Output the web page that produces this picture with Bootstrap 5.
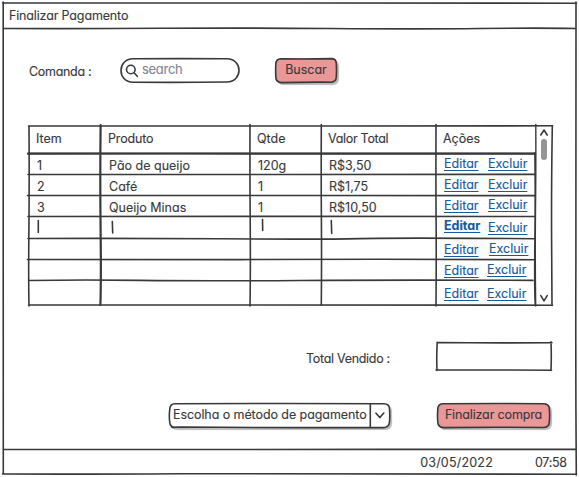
<!DOCTYPE html>
<html lang="pt-BR">
<head>
<meta charset="utf-8">
<meta name="viewport" content="width=device-width, initial-scale=1">
<title>Finalizar Pagamento</title>
<link href="https://cdn.jsdelivr.net/npm/bootstrap@5.3.0/dist/css/bootstrap.min.css" rel="stylesheet">
<style>
  :root { --ink: #38393b; --rose: #e99797; --link: #155a9f; }
  body { font-family: Inter, "Liberation Sans", sans-serif; font-feature-settings: "cv11"; font-size: 12.5px; line-height: 16px; color: var(--ink); -webkit-text-stroke: .12px; }
  .window { width: 579px; height: 477px; }
  .ink { inset: 0; width: 100%; height: 100%; overflow: visible; fill: none; stroke: var(--ink); stroke-width: 1.6; stroke-linecap: round; stroke-linejoin: round; pointer-events: none; }
  .tight { letter-spacing: -.15px; }
  .tighter { letter-spacing: -.3px; }
  .titlebar { height: 29px; padding: 8px 0 0 9px; }
  .searchrow { height: 97px; padding: 29px 0 0 29px; }
  .cmd-label { width: 91px; padding-top: 6px; }
  .pill { width: 120px; height: 25px; margin-right: 35px; padding: 3px 0 0 22px; color: #85858f; font-size: 13px; letter-spacing: -.3px; }
  .sketch-btn { border: 0; border-radius: 6px; background: var(--rose); color: var(--ink); font: inherit; line-height: 16px; box-shadow: 2px 2px 1px #b9b9b9; }
  .find { width: 62px; height: 25px; }
  .sketch-btn span { display: block; margin-top: -2px; }
  .grid-area { height: 179px; margin-left: 29px; width: 523px; }
  .orders { width: 507px; height: 179px; table-layout: fixed; border-collapse: collapse; color: inherit; }
  .orders th, .orders td { padding: 4.5px 0 0 8px; font-weight: 400; vertical-align: top; overflow: hidden; white-space: nowrap; }
  .orders th { padding-left: 7px; }
  .orders th:nth-child(2) { padding-left: 8px; }
  .orders td:nth-child(2) { padding-left: 9px; }
  .orders td.acts { padding: 1px 0 0 8px; }
  .acts a { color: var(--link); text-decoration: underline; text-underline-offset: 2px; text-decoration-skip-ink: none; text-decoration-thickness: 1px; }
  .acts a:first-child { width: 44px; }
  .acts .near { width: 43px !important; }
  .acts .far { width: 45px !important; }
  .t1 { padding-top: 1px; } .t2 { padding-top: 2px; } .t3 { padding-top: 3px; } .t4 { padding-top: 4px; }
  .scroller { width: 16px; padding: 13px 0 0 5px; }
  .thumb { width: 6px; height: 21px; border-radius: 3px; background: #949494; }
  .totalrow { height: 98px; padding: 37px 27px 0 0; }
  .total-label { width: 130px; padding-top: 9px; }
  .total-box { width: 116px; height: 28px; }
  .payrow { height: 46px; padding-left: 169px; }
  .method { width: 221px; height: 25px; border-radius: 6px; background: #fff; box-shadow: 2px 2px 1px #bdbdbd; padding: 4px 0 0 4px; margin-right: 47px; letter-spacing: -.08px; }
  .finish { width: 113px; height: 25px; letter-spacing: -.14px; }
  .statusbar { height: 27px; padding: 6px 13px 0 0; }
  .stamp { letter-spacing: .2px; }
  .clock { width: 31px; margin-left: 42px; letter-spacing: -.3px; }
</style>
<script src="https://cdn.jsdelivr.net/npm/bootstrap@5.3.0/dist/js/bootstrap.bundle.min.js"></script>
</head>
<body class="overflow-hidden bg-white">
<main class="window position-relative d-flex flex-column text-nowrap">
  <svg class="ink position-absolute" viewBox="0 0 579 477">
    <path d="M2.500 3Q150 2.800 300 3T576.500 3.200M3.200 2Q3.500 120 3.200 240T3.300 474M576 2Q576.300 150 575.900 260T576.300 475M2.500 474Q80 474.400 180 473.700T576.500 474.200"/>
    <path d="M3.500 28.500Q80 28.800 160 28.300T330 28.500T480 28.500T575.500 28.500M3.500 449.500Q90 449.200 180 449.500T380 449.400T575.500 449.400"/>
  </svg>
  <header class="titlebar tight">Finalizar Pagamento</header>
  <section class="searchrow d-flex align-items-start">
    <span class="cmd-label tighter">Comanda :</span>
    <div class="pill position-relative">
      <svg class="ink position-absolute" viewBox="0 0 120 25">
        <path d="M13 .8Q60 .4 107 .8C123 1 123 23.500 107 24Q60 24.600 13 24.200C-3 24 -3 1 13 .8Z"/>
        <circle cx="10.800" cy="11.500" r="4.300"/><path d="M14 14.800L17.300 18.300"/>
      </svg>search</div>
    <button class="sketch-btn find position-relative p-0" type="button">
      <svg class="ink position-absolute" viewBox="0 0 62 25"><path d="M6 .8Q30 1.200 57 .6Q61.500 1 61.300 6Q61.800 13 61.300 19Q61 24 56 24.200Q30 24 6 24.600Q1 24 .8 19Q.4 12 .8 6Q1 1 6 .8Z"/></svg><span>Buscar</span></button>
  </section>
  <section class="grid-area d-flex position-relative">
    <table class="orders">
      <colgroup><col style="width:71px"><col style="width:150px"><col style="width:71px"><col style="width:115px"><col style="width:100px"></colgroup>
      <thead><tr style="height:27px"><th>Item</th><th class="tight">Produto</th><th>Qtde</th><th class="tighter">Valor Total</th><th>Ações</th></tr></thead>
      <tbody>
        <tr style="height:21px"><td>1</td><td>Pão de queijo</td><td>120g</td><td>R$3,50</td><td class="acts"><div class="d-flex"><a class="t2" href="#">Editar</a><a class="t2" href="#">Excluir</a></div></td></tr>
        <tr style="height:21px"><td>2</td><td>Café</td><td>1</td><td>R$1,75</td><td class="acts"><div class="d-flex"><a class="t2" href="#">Editar</a><a class="t2" href="#">Excluir</a></div></td></tr>
        <tr style="height:22px"><td>3</td><td>Queijo Minas</td><td>1</td><td>R$10,50</td><td class="acts"><div class="d-flex"><a class="t2" href="#">Editar</a><a class="t1" href="#">Excluir</a></div></td></tr>
        <tr style="height:21px"><td></td><td></td><td></td><td></td><td class="acts"><div class="d-flex"><a class="fw-bold" href="#">Editar</a><a class="t2" href="#">Excluir</a></div></td></tr>
        <tr style="height:22px"><td></td><td></td><td></td><td></td><td class="acts"><div class="d-flex"><a class="t3 far" href="#">Editar</a><a class="t2" href="#">Excluir</a></div></td></tr>
        <tr style="height:21px"><td></td><td></td><td></td><td></td><td class="acts"><div class="d-flex"><a class="t2 near" href="#">Editar</a><a class="t1" href="#">Excluir</a></div></td></tr>
        <tr style="height:24px"><td></td><td></td><td></td><td></td><td class="acts"><div class="d-flex"><a class="t4 near" href="#">Editar</a><a class="t4" href="#">Excluir</a></div></td></tr>
      </tbody>
    </table>
    <div class="scroller"><div class="thumb"></div></div>
    <svg class="ink position-absolute" viewBox="29 126 523 179">
      <path d="M28.500 126Q180 125.800 320 126T552.500 125.800M29 126Q29.400 180 28.900 230T29 306M28.500 305Q140 305.400 250 305T552.500 305.200"/>
      <path d="M28 153.500Q180 153 300 153.500T535 153.500M28 174.500Q150 174.200 280 174.500T535.500 174.400M27.500 195.500Q160 195.800 300 195.500T535 195.600M28 216.500Q180 216.800 300 216.400T535 216.500M28 238.500Q120 238.100 220 238.800T360 238.600T535 238.700M27.500 259.500Q120 259.900 240 259.600T380 259.300T535 259.700M29 280.500Q80 279.700 140 280.400T300 280.500T533 280.400"/>
      <path stroke-width="2.200" d="M28 153.700Q100 153.900 180 153.500T535 153.700M100.600 125Q100 180 100.600 230T100.400 305"/>
      <path d="M250 124.500Q249.800 170 250.200 220T250 306M321.300 124.500Q321.100 180 321.400 220T321.300 305M436 124.500Q435.800 180 436.100 220T436 306M552.300 126Q551.300 190 551.600 240T552 305.500"/>
      <path d="M535.800 124.500Q536 160 535.500 210T535.700 306M534.800 153Q535.400 190 534.800 240T535.200 305" stroke-width="1.400"/>
      <path d="M38.300 220.500V232.500M112.300 221.500L112.700 233M262.500 219.500L262.700 230.500M331.300 220.500L331.700 233.500"/>
      <path d="M540.800 135L544 130L547.200 135M540.800 295.600L544 300.800L547.200 295.600"/>
    </svg>
  </section>
  <section class="totalrow d-flex justify-content-end">
    <span class="total-label tighter">Total Vendido :</span>
    <div class="total-box position-relative">
      <svg class="ink position-absolute" viewBox="436 342 116 28"><path d="M437 342.500Q490 343.100 552 342.700M437.200 342.500Q436.400 356 437 370.500M436 370Q490 369.800 551.500 370.200M551 341.800Q551.600 356 551 370.500"/></svg>
    </div>
  </section>
  <section class="payrow d-flex align-items-start">
    <div class="method position-relative">Escolha o método de pagamento
      <svg class="ink position-absolute" viewBox="169 403 221 25"><path d="M175 403.800Q280 403.200 384 403.800Q389.500 404 389.500 409Q390 416 389.500 422Q389 427.300 384 427.600Q280 427.800 220 427.300T175 427.500Q170 427 169.700 422Q168.900 416 169.800 409Q170 404 175 403.800ZM370.300 404V427.300M376 413.200L379.800 417.600L383.800 413"/></svg>
    </div>
    <button class="sketch-btn finish position-relative p-0" type="button">
      <svg class="ink position-absolute" viewBox="437 403 113 25"><path d="M443 403.800Q490 403.300 544 403.700Q549.300 404 549.300 409Q550 416 549.300 422Q549 427.200 544 427.500Q490 427 443 427.600Q438 427 437.800 422Q437.200 416 437.800 409Q438 404 443 403.800Z"/></svg><span>Finalizar compra</span></button>
  </section>
  <footer class="statusbar d-flex justify-content-end"><span class="stamp">03/05/2022</span><span class="clock">07:58</span></footer>
</main>
</body>
</html>
